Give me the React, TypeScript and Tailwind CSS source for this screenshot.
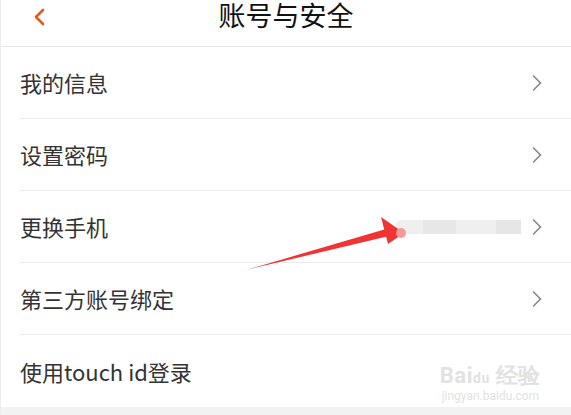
import { ChevronRight } from 'lucide-react'

const ROWS: { label: string; value?: boolean; arrow: boolean }[] = [
  { label: '我的信息', arrow: true },
  { label: '设置密码', arrow: true },
  { label: '更换手机', value: true, arrow: true },
  { label: '第三方账号绑定', arrow: true },
  { label: '使用touch id登录', arrow: false },
]

const font = { fontFamily: '"Noto Sans CJK SC", Roboto, sans-serif' }

export default function App() {
  return (
    <div className="relative w-[571px] h-[415px] overflow-hidden bg-[#f2f2f2] border-l border-[#ececec]" style={font}>
      {/* Header */}
      <div className="relative flex h-[47px] items-start justify-center bg-white border-b border-[#e6e6e6]">
        <svg className="absolute left-[31px] top-[8px]" width="14" height="18" viewBox="0 0 14 18">
          <path d="M11 2 L4 9 L11 16" fill="none" stroke="#e35a1c" strokeWidth="2.6" strokeLinecap="round" strokeLinejoin="round" />
        </svg>
        <span className="text-[27px] leading-[30px] text-[#111]">账号与安全</span>
      </div>

      {/* Rows */}
      <div className="bg-white">
        {ROWS.map((r, i) => (
          <div key={r.label} className="flex h-[72px] items-center pl-[19px]">
            <div
              className={
                'flex h-full flex-1 items-center pr-[20px] ' +
                (i < ROWS.length - 1 ? 'border-b border-[#ececec]' : '')
              }
            >
              <span className="flex-1 text-[22px] text-[#333]">{r.label}</span>
              {r.value && (
                <div className="mr-[2px] flex h-[14px] w-[126px] items-center rounded-full bg-[#ececec] opacity-80">
                  <div className="ml-[28px] h-full w-[40px] bg-[#e2e2e2]" />
                  <div className="ml-[40px] h-full w-[30px] bg-[#e0e0e0]" />
                </div>
              )}
              {r.arrow && <ChevronRight size={28} strokeWidth={1.4} className="text-[#888]" />}
            </div>
          </div>
        ))}
      </div>

      {/* Watermark */}
      <div className="absolute right-[30px] top-[365px] flex flex-col items-center leading-none text-[#e2e2e2]">
        <span className="text-[22px] font-bold tracking-wide" style={{ fontFamily: 'Roboto, sans-serif' }}>
          Bai<span className="text-[14px]">du</span> 经验
        </span>
        <span className="mt-[3px] text-[12px]" style={{ fontFamily: 'Roboto, sans-serif' }}>
          jingyan.baidu.com
        </span>
      </div>

      {/* Red annotation arrow */}
      <svg className="absolute left-0 top-0 pointer-events-none" width="571" height="415">
        <polygon points="245,270 385,229 388,236" fill="#f03333" />
        <polygon points="380,217 403,233 387,244" fill="#f03333" />
        <circle cx="400" cy="233" r="5" fill="#f59a9a" />
      </svg>
    </div>
  )
}
